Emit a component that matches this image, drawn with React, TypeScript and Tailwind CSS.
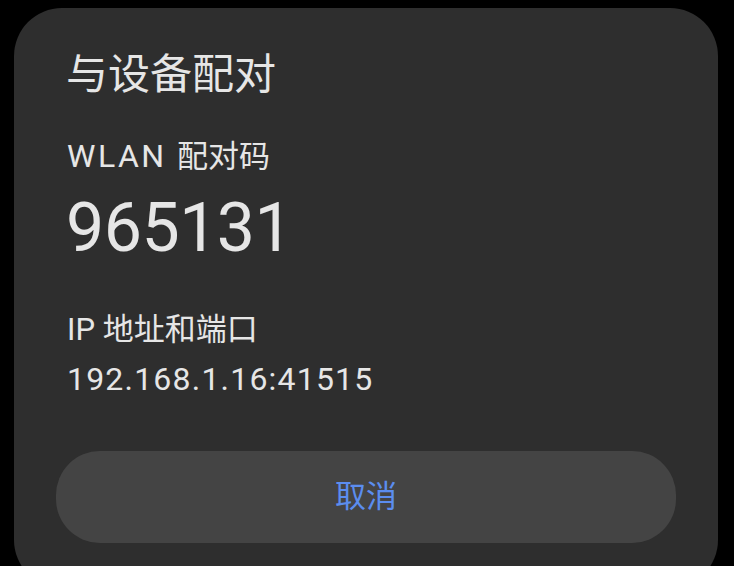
export default function App() {
  // 配对信息
  const pairingCode = '965131';
  const address = '192.168.1.16:41515';

  return (
    <div
      className="h-[566px] w-full overflow-hidden bg-black"
      style={{ fontFamily: 'Roboto, "Noto Sans CJK SC", "Noto Sans", sans-serif' }}
    >
      <div className="ml-[14px] mt-[8px] flex h-[580px] w-[704px] flex-col rounded-[48px] bg-[#2e2e2e] pt-[39px] text-[#e6e6e6]">
        <h1 className="pl-[52px] text-[42px] leading-[56px]">与设备配对</h1>

        <div className="mt-[33px] h-[40px] pl-[53px] text-[31px] leading-[40px]">
          <span className="text-[32px] tracking-[2.5px]">WLAN </span>配对码
        </div>
        <div className="mt-[12px] pl-[52px] text-[68px] leading-[80px] tracking-[-0.5px]">{pairingCode}</div>

        <div className="mt-[42px] pl-[53px] text-[31px] leading-[40px]">IP 地址和端口</div>
        <div className="mt-[9px] pl-[53px] text-[32px] leading-[40px] tracking-[1.2px]">{address}</div>

        <button className="mx-[42px] mt-[52px] h-[92px] rounded-[44px] bg-[#444444] text-[31px] text-[#5b8def]">
          取消
        </button>
      </div>
    </div>
  );
}
